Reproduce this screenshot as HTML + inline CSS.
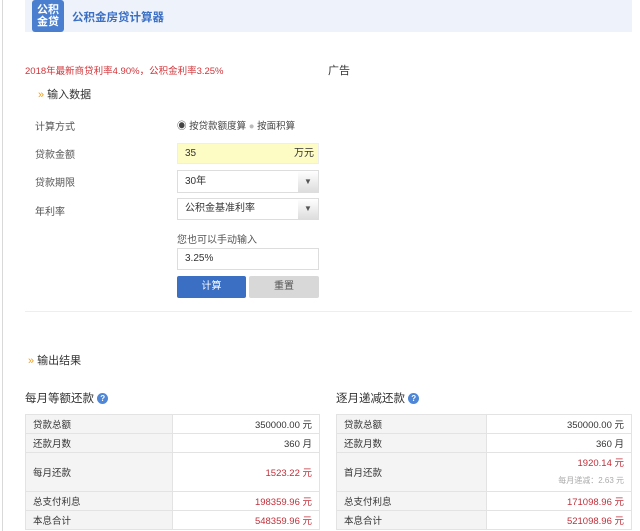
<!DOCTYPE html><html><head><meta charset="utf-8"><style>
*{margin:0;padding:0;box-sizing:border-box}
body{width:640px;height:531px;background:#fff;position:relative;overflow:hidden;font-family:"Liberation Sans","Noto Sans CJK SC",sans-serif;font-size:10px;color:#333}
.a{position:absolute}
.lbl{position:absolute;left:35px;color:#555;font-size:10px}
.box{position:absolute;left:177px;width:142px;border:1px solid #ddd;background:#fff;font-size:10px;padding-left:7px}
.arr{position:absolute;right:0;top:0;bottom:0;width:20px;background:linear-gradient(#fff,#ddd);font-size:8px;text-align:center;color:#555}
table{position:absolute;border-collapse:collapse;font-size:9.5px}
td{border:1px solid #e3e3e3;padding:0 7px;height:19px}
td.r{text-align:right}
tr td:first-child{background:#f4f4f4}
.red{color:#c0303a}
.q{display:inline-block;width:11px;height:11px;border-radius:50%;background:#4f87d8;color:#fff;font-size:8px;text-align:center;line-height:11px;vertical-align:1px;font-weight:bold}
</style></head><body>
<div class="a" style="left:2px;top:0;width:1px;height:531px;background:#d9d9d9"></div>
<div class="a" style="left:25px;top:0;width:607px;height:32px;background:#eef3fb"></div>
<div class="a" style="left:32px;top:0;width:32px;height:32px;background:#4a7fd0;border-radius:3px;color:#fff;font-size:11px;line-height:12px;text-align:center;padding-top:4px;font-weight:bold">公积<br>金贷</div>
<div class="a" style="left:72px;top:9px;color:#3a6fc4;font-size:11.5px;font-weight:bold">公积金房贷计算器</div>
<div class="a" style="left:25px;top:63px;color:#d0353a;font-size:9.5px">2018年最新商贷利率4.90%，公积金利率3.25%</div>
<div class="a" style="left:328px;top:62px;font-size:11px;color:#333">广告</div>
<div class="a" style="left:38px;top:86px;font-size:11px"><span style="color:#f0a020">»</span> 输入数据</div>
<div class="lbl" style="top:118px">计算方式</div>
<div class="a" style="left:177px;top:118px;font-size:9.5px;color:#444">◉ 按贷款额度算 <span style="color:#bbb">●</span> 按面积算</div>
<div class="lbl" style="top:146px">贷款金额</div>
<div class="box" style="top:143px;height:21px;line-height:19px;background:#fdfcc4;border-color:#eee">35<span style="position:absolute;right:4px">万元</span></div>
<div class="lbl" style="top:174px">贷款期限</div>
<div class="box" style="top:170px;height:23px;line-height:21px">30年<div class="arr" style="line-height:21px">▼</div></div>
<div class="lbl" style="top:203px">年利率</div>
<div class="box" style="top:198px;height:22px;line-height:20px">公积金基准利率<div class="arr" style="line-height:20px">▼</div></div>
<div class="a" style="left:177px;top:231px;color:#555;font-size:10px">您也可以手动输入</div>
<div class="box" style="top:248px;height:22px;line-height:20px">3.25%</div>
<div class="a" style="left:177px;top:276px;width:69px;height:22px;background:#3a6fc4;border-radius:2px;color:#fff;text-align:center;line-height:22px">计算</div>
<div class="a" style="left:249px;top:276px;width:70px;height:22px;background:#d8d8d8;border-radius:2px;color:#555;text-align:center;line-height:22px">重置</div>
<div class="a" style="left:25px;top:311px;width:607px;height:1px;background:#eee"></div>
<div class="a" style="left:28px;top:352px;font-size:11px"><span style="color:#f0a020">»</span> 输出结果</div>
<div class="a" style="left:25px;top:390px;font-size:11.5px">每月等额还款 <span class="q">?</span></div>
<div class="a" style="left:336px;top:390px;font-size:11.5px">逐月递减还款 <span class="q">?</span></div>
<table style="left:25px;top:414px;width:295px">
<tr><td style="width:147px">贷款总额</td><td class="r">350000.00 元</td></tr>
<tr><td>还款月数</td><td class="r">360 月</td></tr>
<tr><td style="height:39px">每月还款</td><td class="r red">1523.22 元</td></tr>
<tr><td>总支付利息</td><td class="r red">198359.96 元</td></tr>
<tr><td>本息合计</td><td class="r red">548359.96 元</td></tr>
</table>
<table style="left:336px;top:414px;width:296px">
<tr><td style="width:150px">贷款总额</td><td class="r">350000.00 元</td></tr>
<tr><td>还款月数</td><td class="r">360 月</td></tr>
<tr><td style="height:39px">首月还款</td><td class="r red" style="line-height:17px">1920.14 元<br><span style="color:#aaa;font-size:8px">每月递减：2.63 元</span></td></tr>
<tr><td>总支付利息</td><td class="r red">171098.96 元</td></tr>
<tr><td>本息合计</td><td class="r red">521098.96 元</td></tr>
</table>
</body></html>
